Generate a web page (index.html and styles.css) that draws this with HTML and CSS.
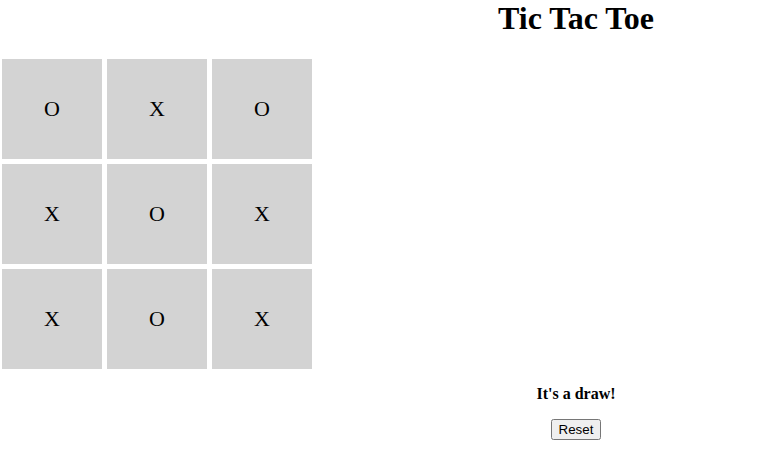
FILE: index.html
```html
<!DOCTYPE html>
<html lang="en">
<head>
    <meta charset="UTF-8">
    <meta name="viewport" content="width=device-width, initial-scale=1.0">
    <title>Tic Tac Toe</title>
    <link rel="stylesheet" href="styles.css">
</head>
<body>
    <div class="game">
        <h1 class="title">Tic Tac Toe</h1>

        <!-- Papan permainan -->
        <div class="board">
            <div class="cell">O</div>
            <div class="cell">X</div>
            <div class="cell">O</div>
            <div class="cell">X</div>
            <div class="cell">O</div>
            <div class="cell">X</div>
            <div class="cell">X</div>
            <div class="cell">O</div>
            <div class="cell">X</div>
        </div>

        <div class="footer">
            <p class="status">It's a draw!</p>
            <button type="button" class="reset">Reset</button>
        </div>
    </div>
</body>
</html>
```

FILE: styles.css
```css
body {
    font-family: "Liberation Serif", "Times New Roman", serif;
    margin: 0;
    background-color: #fff;
    color: #000;
}
.game {
    display: grid;
    grid-template-columns: 391px 1fr;
}
.title {
    grid-column: 2;
    grid-row: 1;
    margin: 0 0 22px;
    font-size: 32px;
    text-align: center;
}
.board {
    grid-column: 1;
    grid-row: 2;
    display: grid;
    grid-template-columns: repeat(3, 100px);
    grid-auto-rows: 100px;
    gap: 5px;
    margin-left: 2px;
}
.cell {
    background-color: lightgray;
    display: flex;
    justify-content: center;
    align-items: center;
    font-size: 22px;
}
.footer {
    grid-column: 2;
    grid-row: 3;
    text-align: center;
}
.status {
    font-weight: bold;
    margin: 16px 0;
}
.reset {
    font-family: "Liberation Sans", Arial, sans-serif;
}
```
